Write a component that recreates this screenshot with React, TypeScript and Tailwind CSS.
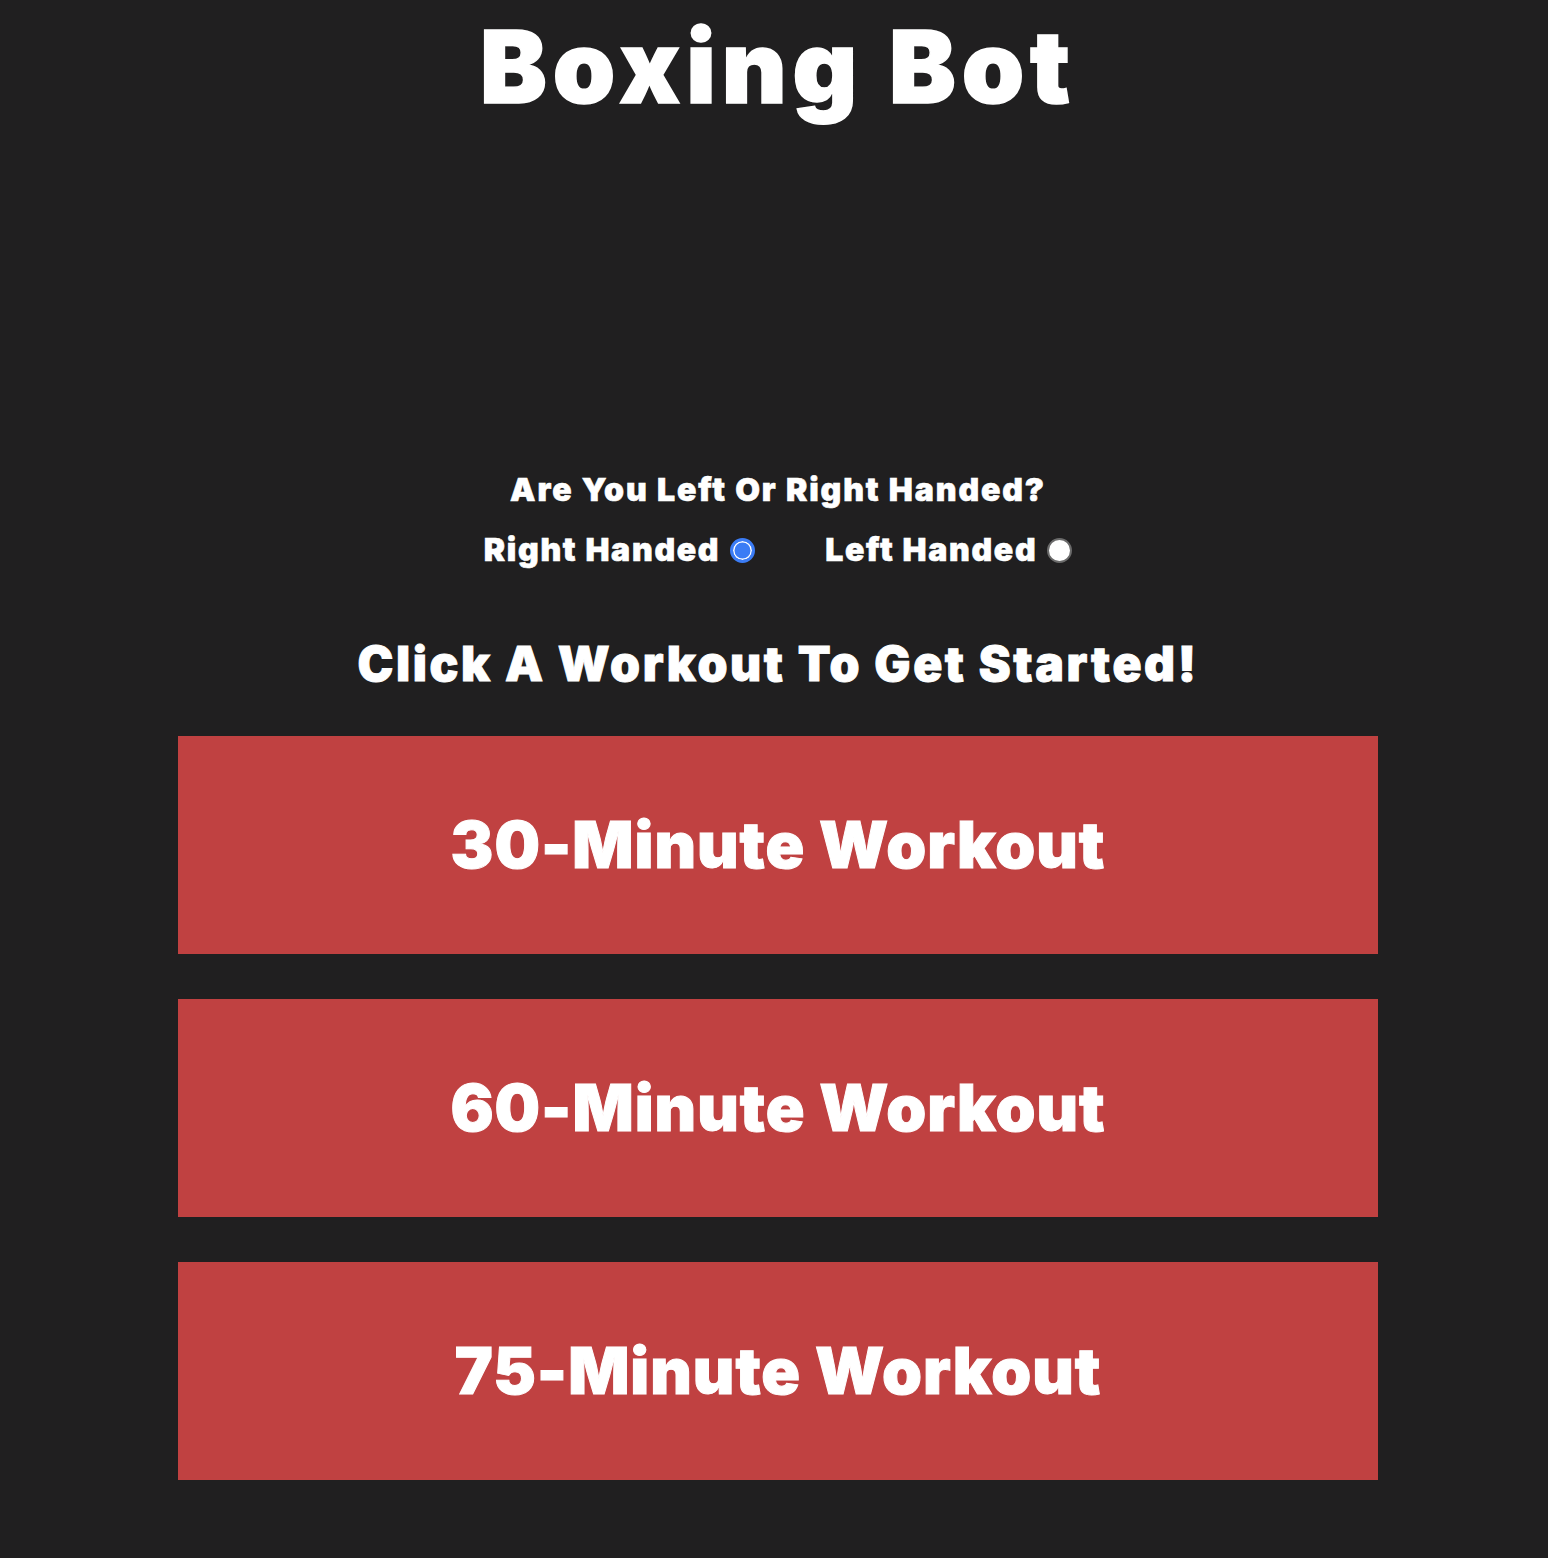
import React, { useState } from 'react';

const workouts = ['30-Minute Workout', '60-Minute Workout', '75-Minute Workout'];

const radioClass =
  'appearance-none w-[25px] h-[25px] rounded-full bg-white border-2 border-[#6b6b6b] checked:border-[3px] checked:border-[#3b7cf5] checked:bg-[#3b7cf5] checked:shadow-[inset_0_0_0_1.5px_white] cursor-pointer';

export default function App() {
  const [hand, setHand] = useState<'right' | 'left'>('right');

  return (
    <div className="min-h-screen bg-[#201f20] text-white font-['Inter','Liberation_Sans',sans-serif] font-black pl-2 pb-[78px]">
      <h1 className="pt-[17px] text-center text-[100px] leading-none tracking-[5.9px] [-webkit-text-stroke:1.5px_white]">
        Boxing Bot
      </h1>

      <p className="mt-[357px] text-center text-[32px] leading-none tracking-[1.9px] [-webkit-text-stroke:0.6px_white]">
        Are You Left Or Right Handed?
      </p>

      <div className="mt-7 flex justify-center items-center text-[32px] leading-none tracking-[1.7px] [-webkit-text-stroke:0.6px_white]">
        <label className="flex items-center gap-[10px]">
          Right Handed
          <input
            type="radio"
            name="hand"
            className={radioClass}
            checked={hand === 'right'}
            onChange={() => setHand('right')}
          />
        </label>
        <label className="ml-[70px] flex items-center gap-[10px]">
          Left Handed
          <input
            type="radio"
            name="hand"
            className={radioClass}
            checked={hand === 'left'}
            onChange={() => setHand('left')}
          />
        </label>
      </div>

      <h2 className="mt-[74px] text-center text-[48px] leading-none tracking-[2.6px] [-webkit-text-stroke:0.9px_white]">
        Click A Workout To Get Started!
      </h2>

      <div className="mt-12 mx-auto w-[1200px] flex flex-col gap-[45px]">
        {workouts.map((w) => (
          <button
            key={w}
            className="h-[218px] w-full bg-[#c04141] flex items-center justify-center text-[64px] leading-none font-black tracking-[1px] [-webkit-text-stroke:1px_white] cursor-pointer"
          >
            {w}
          </button>
        ))}
      </div>
    </div>
  );
}
